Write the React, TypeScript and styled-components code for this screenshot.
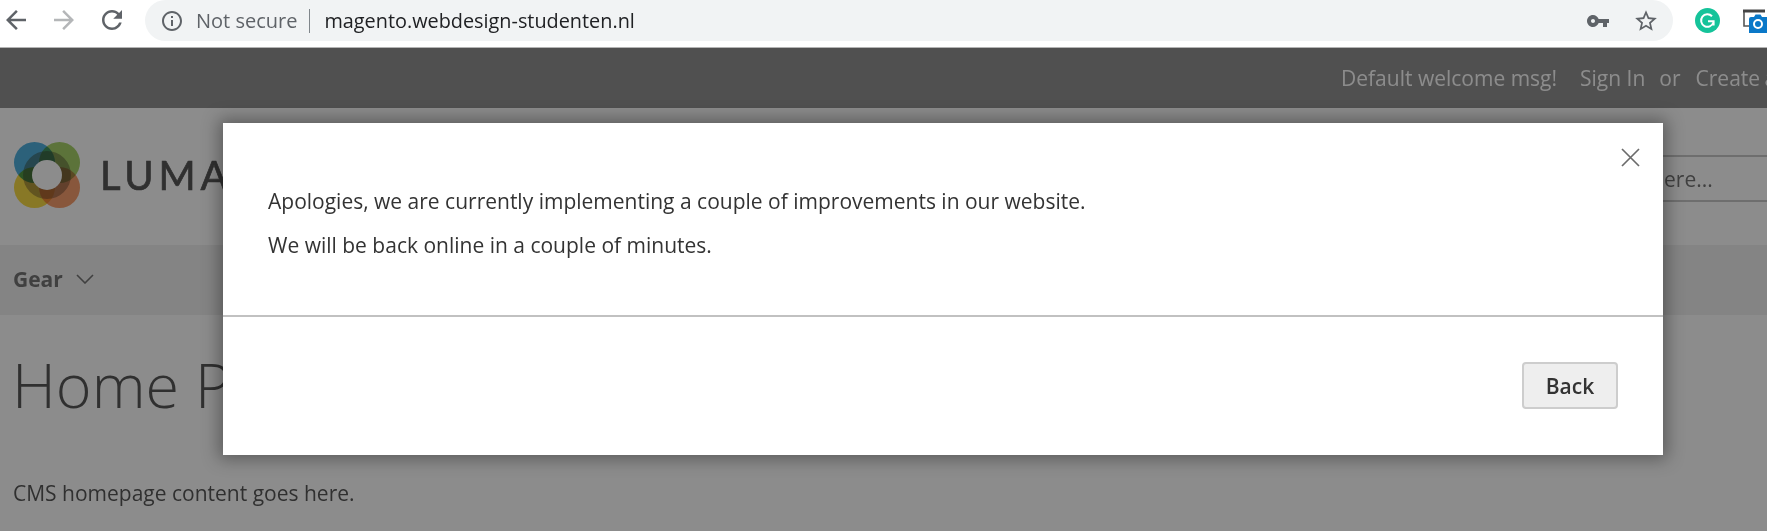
import React from 'react';
import styled, { createGlobalStyle } from 'styled-components';

const Global = createGlobalStyle`
  html, body { margin: 0; padding: 0; background: #fff; }
  body { font-family: "Open Sans", "Noto Sans", sans-serif; overflow: hidden; }
`;

const Window = styled.div`
  width: 1767px;
  height: 531px;
  overflow: hidden;
  display: flex;
  flex-direction: column;
`;

const BrowserBar = styled.div`
  flex: none;
  height: 47px;
  display: flex;
  align-items: flex-start;
  background: #fff;
  border-bottom: 1px solid #b4b4b4;
  overflow: hidden;
`;

const NavIcon = styled.svg<{ $ml: number; $mr?: number; $size?: number; $top?: number }>`
  flex: none;
  width: ${p => p.$size ?? 30}px;
  height: ${p => p.$size ?? 30}px;
  margin-left: ${p => p.$ml}px;
  margin-right: ${p => p.$mr ?? 0}px;
  margin-top: ${p => p.$top ?? 5}px;
`;

const AddressPill = styled.div`
  flex: none;
  width: 1528px;
  height: 41px;
  margin-left: 18px;
  display: flex;
  align-items: center;
  background: #f1f3f4;
  border-radius: 21px;
`;

const NotSecure = styled.span`
  margin-left: 12px;
  font-size: 20px;
  color: #5f6368;
  white-space: nowrap;
`;

const UrlDivider = styled.span`
  width: 1px;
  height: 24px;
  margin-left: 12px;
  background: #80868b;
`;

const UrlText = styled.span`
  margin-left: 14px;
  font-size: 19.85px;
  color: #202124;
  white-space: nowrap;
  flex: 1;
`;

const Page = styled.div`
  position: relative;
  flex: 1;
  overflow: hidden;
  background: #fff;
`;

const TopPanel = styled.div`
  height: 60px;
  background: #7a7a7a;
  display: flex;
  align-items: center;
  padding-left: 1341px;
  white-space: nowrap;
  font-size: 21px;
  color: #fff;
`;

const PanelItem = styled.span<{ $ml?: number; $tight?: boolean }>`
  margin-left: ${p => p.$ml ?? 0}px;
  word-spacing: ${p => (p.$tight ? '-1px' : 'normal')};
  flex: none;
`;

const SiteHeader = styled.header`
  height: 137px;
  display: flex;
  align-items: flex-start;
  overflow: hidden;
`;

const LogoMark = styled.svg`
  flex: none;
  width: 66px;
  height: 66px;
  margin: 34px 0 0 14px;
`;

const LogoPetals = styled.g`
  isolation: isolate;
  & > circle { mix-blend-mode: multiply; }
`;

const LogoWord = styled.span`
  flex: none;
  margin: 34px 0 0 20px;
  font-family: "Lato", sans-serif;
  font-size: 40px;
  line-height: 66px;
  letter-spacing: 4.8px;
  font-weight: 400;
  -webkit-text-stroke: 0.7px #333;
  color: #333;
`;

const SearchBox = styled.div`
  flex: none;
  width: 437px;
  height: 47px;
  box-sizing: border-box;
  margin: 47px -110px 0 auto;
  padding-left: 18px;
  display: flex;
  align-items: center;
  border: 2px solid #bcbcbc;
  font-size: 21px;
  color: #575757;
  white-space: nowrap;
`;

const MainNav = styled.nav`
  height: 70px;
  box-sizing: border-box;
  background: #ededed;
  display: flex;
  align-items: center;
  padding: 0 0 2px 13px;
  gap: 13px;
`;

const NavLabel = styled.span`
  font-size: 21px;
  font-weight: 700;
  color: #575757;
`;

const Chevron = styled.svg`
  width: 18px;
  height: 10px;
`;

const PageTitle = styled.h1`
  margin: 28px 0 0 12px;
  font-size: 61px;
  line-height: 84px;
  font-weight: 300;
  color: #333;
  white-space: nowrap;
`;

const CmsText = styled.p`
  margin: 52px 0 0 13px;
  font-size: 21px;
  line-height: 28px;
  color: #333;
`;

const Overlay = styled.div`
  position: absolute;
  inset: 0;
  background: rgba(46, 46, 46, 0.55);
`;

const Modal = styled.section`
  position: absolute;
  left: 223px;
  top: 75px;
  width: 1440px;
  height: 332px;
  display: flex;
  flex-direction: column;
  background: #fff;
  box-shadow: 0 0 16px 4px rgba(0, 0, 0, 0.35);
`;

const CloseButton = styled.svg`
  position: absolute;
  top: 25px;
  right: 23px;
  width: 19px;
  height: 19px;
`;

const ModalBody = styled.div`
  height: 194px;
  flex: none;
  box-sizing: border-box;
  padding: 64px 45px 0;
  border-bottom: 2px solid #c1c1c1;
`;

const ModalLine = styled.p`
  margin: 0 0 16px;
  font-size: 21px;
  line-height: 28px;
  color: #333;
`;

const ModalFooter = styled.div`
  flex: 1;
  display: flex;
  justify-content: flex-end;
  padding: 45px 45px 0 0;
`;

const BackButton = styled.button`
  width: 96px;
  height: 47px;
  box-sizing: border-box;
  background: #eee;
  border: 2px solid #cdcdcd;
  border-radius: 4px;
  font-family: "Open Sans", sans-serif;
  font-size: 21px;
  font-weight: 600;
  color: #333;
  padding: 0;
`;

const App: React.FC = () => (
  <Window>
    <Global />
    <BrowserBar>
      <NavIcon $ml={1} viewBox="0 0 24 24" fill="#5f6368">
        <path d="M20 11H7.83l5.59-5.59L12 4l-8 8 8 8 1.41-1.41L7.83 13H20v-2z" />
      </NavIcon>
      <NavIcon $ml={18} viewBox="0 0 24 24" fill="#b4b6b8">
        <path d="M4 11h12.17l-5.59-5.59L12 4l8 8-8 8-1.41-1.41L16.17 13H4v-2z" />
      </NavIcon>
      <NavIcon $ml={18} viewBox="0 0 24 24" fill="#5f6368">
        <path d="M17.65 6.35C16.2 4.9 14.21 4 12 4c-4.42 0-7.99 3.58-7.99 8s3.57 8 7.99 8c3.73 0 6.84-2.55 7.73-6h-2.08c-.82 2.33-3.04 4-5.65 4-3.31 0-6-2.69-6-6s2.69-6 6-6c1.66 0 3.14.69 4.22 1.78L13 11h7V4l-2.35 2.35z" />
      </NavIcon>
      <AddressPill>
        <NavIcon $ml={15} $size={24} $top={0} viewBox="0 0 24 24" fill="#5f6368">
          <path d="M11 7h2v2h-2zm0 4h2v6h-2zm1-9C6.48 2 2 6.48 2 12s4.48 10 10 10 10-4.48 10-10S17.52 2 12 2zm0 18c-4.41 0-8-3.59-8-8s3.59-8 8-8 8 3.59 8 8-3.59 8-8 8z" />
        </NavIcon>
        <NotSecure>Not secure</NotSecure>
        <UrlDivider />
        <UrlText>magento.webdesign-studenten.nl</UrlText>
        <NavIcon $ml={0} $size={24} $top={0} viewBox="0 0 24 24" fill="#5f6368">
          <path d="M12.65 10C11.83 7.67 9.61 6 7 6c-3.31 0-6 2.69-6 6s2.69 6 6 6c2.61 0 4.83-1.67 5.65-4H17v4h4v-4h2v-4H12.65zM7 14c-1.1 0-2-.9-2-2s.9-2 2-2 2 .9 2 2-.9 2-2 2z" />
        </NavIcon>
        <NavIcon $ml={23} $mr={14} $size={26} $top={0} viewBox="0 0 24 24" fill="#5f6368">
          <path d="M22 9.24l-7.19-.62L12 2 9.19 8.63 2 9.24l5.46 4.73L5.82 21 12 17.27 18.18 21l-1.63-7.03L22 9.24zM12 15.4l-3.76 2.27 1-4.28-3.32-2.88 4.38-.38L12 6.1l1.71 4.04 4.38.38-3.32 2.88 1 4.28L12 15.4z" />
        </NavIcon>
      </AddressPill>
      <NavIcon $ml={22} $size={25} $top={8} viewBox="0 0 25 25">
        <circle cx="12.5" cy="12.5" r="12.5" fill="#15c39a" />
        <path d="M17 8.2A6.3 6.3 0 1 0 18.4 14.5" fill="none" stroke="#fff" strokeWidth="2" />
        <path d="M13 13.2h5.6v4.2" fill="none" stroke="#fff" strokeWidth="2" />
      </NavIcon>
      <NavIcon $ml={23} $size={25} $top={8} viewBox="0 0 25 25">
        <path d="M1 3v15h6" fill="none" stroke="#555" strokeWidth="1.6" />
        <path d="M0 1.5h22v3H0z" fill="#444" />
        <path d="M6 11a2 2 0 0 1 2-2h3l1.5-2.5h5L19 9h6v16H6z" fill="#0a78c8" />
        <circle cx="15" cy="16" r="4" fill="none" stroke="#fff" strokeWidth="2" />
      </NavIcon>
    </BrowserBar>
    <Page>
      <TopPanel>
        <PanelItem>Default welcome msg!</PanelItem>
        <PanelItem $ml={23}>Sign In</PanelItem>
        <PanelItem $ml={14}>or</PanelItem>
        <PanelItem $ml={15} $tight>Create an Account</PanelItem>
      </TopPanel>
      <SiteHeader>
        <LogoMark viewBox="0 0 66 66">
          <LogoPetals>
            <circle cx="20.5" cy="20.5" r="20.5" fill="#2c9fd8" />
            <circle cx="45.5" cy="20.5" r="20.5" fill="#95c84a" />
            <circle cx="20.5" cy="45.5" r="20.5" fill="#f6d21e" />
            <circle cx="45.5" cy="45.5" r="20.5" fill="#f78a4e" />
            <circle cx="33" cy="33" r="24" fill="#a8a08a" />
          </LogoPetals>
          <circle cx="33" cy="33" r="15" fill="#fff" />
        </LogoMark>
        <LogoWord>LUMA</LogoWord>
        <SearchBox>Search entire store here...</SearchBox>
      </SiteHeader>
      <MainNav>
        <NavLabel>Gear</NavLabel>
        <Chevron viewBox="0 0 18 10" fill="none" stroke="#575757" strokeWidth="1.6">
          <path d="M1 1l8 8 8-8" />
        </Chevron>
      </MainNav>
      <PageTitle>Home Page</PageTitle>
      <CmsText>CMS homepage content goes here.</CmsText>
      <Overlay />
      <Modal>
        <CloseButton viewBox="0 0 19 19" fill="none" stroke="#6b6b6b" strokeWidth="1.7">
          <path d="M1 1l17 17M18 1L1 18" />
        </CloseButton>
        <ModalBody>
          <ModalLine>Apologies, we are currently implementing a couple of improvements in our website.</ModalLine>
          <ModalLine>We will be back online in a couple of minutes.</ModalLine>
        </ModalBody>
        <ModalFooter>
          <BackButton>Back</BackButton>
        </ModalFooter>
      </Modal>
    </Page>
  </Window>
);

export default App;
